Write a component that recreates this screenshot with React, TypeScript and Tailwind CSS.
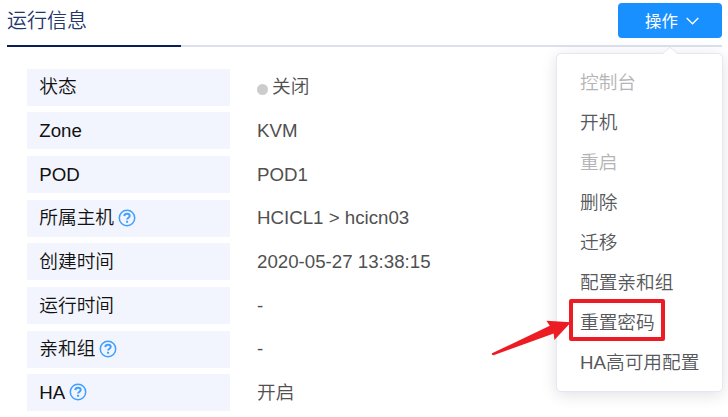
import React from "react";

type Row = { label: string; value: string; help?: boolean; dot?: boolean };

const rows: Row[] = [
  { label: "状态", value: "关闭", dot: true },
  { label: "Zone", value: "KVM" },
  { label: "POD", value: "POD1" },
  { label: "所属主机", value: "HCICL1 > hcicn03", help: true },
  { label: "创建时间", value: "2020-05-27 13:38:15" },
  { label: "运行时间", value: "-" },
  { label: "亲和组", value: "-", help: true },
  { label: "HA", value: "开启", help: true },
];

const actions = [
  { label: "控制台", disabled: true },
  { label: "开机" },
  { label: "重启", disabled: true },
  { label: "删除" },
  { label: "迁移" },
  { label: "配置亲和组" },
  { label: "重置密码", marked: true },
  { label: "HA高可用配置" },
];

function HelpIcon() {
  return (
    <svg className="mb-[2px] ml-[4px] size-[18px] shrink-0" viewBox="0 0 18 18" fill="none" stroke="#409eff">
      <circle cx="9" cy="9" r="7.7" strokeWidth="1.5" />
      <path d="M6.3 7.1C6.5 5.5 7.5 4.8 9 4.8c1.6 0 2.7.8 2.7 2.1 0 1.8-2.6 1.8-2.6 3.7" strokeWidth="2" />
      <path d="M8 11.8h2.1v1.9H8z" fill="#409eff" stroke="none" />
    </svg>
  );
}

function ActionMenu() {
  return (
    <div className="absolute top-[53px] left-[556px] h-[339px] w-[167px] rounded-[5px] border border-[#e3e8f6] bg-white pt-[9px] shadow-[0_3px_16px_rgba(0,0,0,0.12)]">
      <svg className="absolute -top-[7px] left-[105px] h-[8px] w-[16px]" viewBox="0 0 16 8">
        <path d="M0 8 7 1Q8 0 9 1L16 8Z" fill="#fff" />
        <path d="M0 7 7 1Q8 0 9 1L16 7" fill="none" stroke="#e3e8f6" strokeWidth="1" />
      </svg>
      {actions.map((a) => (
        <div
          key={a.label}
          className={`relative flex h-[40px] items-center pl-[23px] whitespace-nowrap ${a.disabled ? "text-[#b4b4b6]" : "text-[#56585c]"}`}
        >
          {a.label}
          {a.marked && (
            <span className="absolute -top-[4px] left-[12px] h-[42px] w-[96px] rounded-[2px] border-4 border-[#ed1c24]" />
          )}
        </div>
      ))}
    </div>
  );
}

export default function App() {
  return (
    <div className="relative h-[417px] w-[728px] overflow-hidden bg-white font-['Liberation_Sans','Noto_Sans_CJK_SC',sans-serif] text-[18.7px] leading-none font-[350]">
      <header className="ml-[7px] flex h-[47px] w-[715px] justify-between border-b-2 border-[#dcdfee]">
        <h1 className="flex h-[47px] w-[174px] items-center border-b-2 border-[#0b1f56] pb-[4px] text-[20px] font-[350] text-[#24356b]">
          运行信息
        </h1>
        <button className="mt-[3px] flex h-[35px] w-[104px] items-center rounded-[4px] bg-[#1890ff] pt-px pl-[27px] text-[16.4px] font-normal text-white">
          操作
          <svg className="ml-[8px] h-[8px] w-[13px]" viewBox="0 0 13 8" fill="none" stroke="white" strokeWidth="1.4">
            <path d="m.7 1 5.8 5.8L12.3 1" />
          </svg>
        </button>
      </header>
      <main className="mt-[21.6px] ml-[27px]">
        {rows.map((r) => (
          <div key={r.label} className="flex h-[43.68px] items-start">
            <div className="flex h-[37px] w-[203px] items-center bg-[#f2f5fd] pt-px pl-[12.3px] text-[#111111]">
              {r.label}
              {r.help && <HelpIcon />}
            </div>
            <div className="flex h-[37px] items-center pt-px pl-[27px] text-[#505050]">
              {r.dot && <span className="mt-[3px] mr-[4px] size-[11px] rounded-full bg-[#cccccc]" />}
              {r.value}
            </div>
          </div>
        ))}
      </main>
      <ActionMenu />
      <svg className="absolute top-[317px] left-[488px] h-[42px] w-[84px]" viewBox="488 317 84 42">
        <path
          d="M492 353.3 549.8 325.8 546.4 320.8 571 322.2 554.4 339.9 553.7 333.5 493.5 355.2Q491 354.8 492 353.3Z"
          fill="#ed1c24"
        />
      </svg>
    </div>
  );
}
